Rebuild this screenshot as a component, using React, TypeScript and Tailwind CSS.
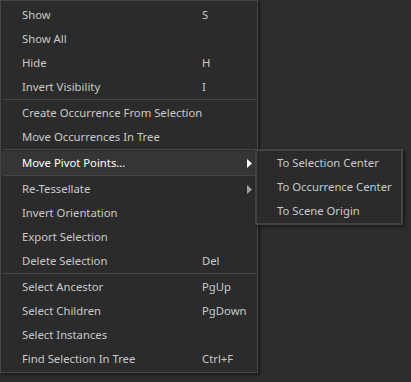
import React from "react";

type Item = { label: string; shortcut?: string; sub?: boolean; active?: boolean } | "sep";

const items: Item[] = [
  { label: "Show", shortcut: "S" },
  { label: "Show All" },
  { label: "Hide", shortcut: "H" },
  { label: "Invert Visibility", shortcut: "I" },
  "sep",
  { label: "Create Occurrence From Selection" },
  { label: "Move Occurrences In Tree" },
  "sep",
  { label: "Move Pivot Points...", sub: true, active: true },
  "sep",
  { label: "Re-Tessellate", sub: true },
  { label: "Invert Orientation" },
  { label: "Export Selection" },
  { label: "Delete Selection", shortcut: "Del" },
  "sep",
  { label: "Select Ancestor", shortcut: "PgUp" },
  { label: "Select Children", shortcut: "PgDown" },
  { label: "Select Instances" },
  { label: "Find Selection In Tree", shortcut: "Ctrl+F" },
];

function Arrow({ color }: { color: string }) {
  return (
    <svg width="5" height="9" viewBox="0 0 5 9" className="shrink-0">
      <path d="M0 0 L5 4.5 L0 9 Z" fill={color} />
    </svg>
  );
}

export default function App() {
  return (
    <div
      className="relative w-[411px] h-[382px] bg-[#2d2d2d] overflow-hidden"
      style={{ fontFamily: '"Segoe UI", "Noto Sans", sans-serif' }}
    >
      <div className="flex flex-col w-[258px] border border-[#464646] bg-[#2b2b2b] pt-[2px] pb-[1px] shadow-[2px_2px_3px_rgba(0,0,0,0.45)] text-[11.3px] leading-[16px]">
        {items.map((it, i) =>
          it === "sep" ? (
            <div key={i} className="h-[1px] bg-[#464646] ml-[2px] mb-[1px]" />
          ) : (
            <div
              key={i}
              className={`h-[24px] flex items-center pl-[21px] pr-[5px] ${
                it.active ? "bg-[#353535] text-white" : "text-[#c9c9c9]"
              }`}
            >
              <span className="w-[180px] shrink-0 whitespace-nowrap">{it.label}</span>
              <span className="flex-1 whitespace-nowrap">{it.shortcut ?? ""}</span>
              {it.sub && <Arrow color={it.active ? "#ffffff" : "#a0a0a0"} />}
            </div>
          )
        )}
      </div>
      <div className="absolute left-[255px] top-[149px] w-[148px] flex flex-col border-[2px] border-[#434343] bg-[#2b2b2b] shadow-[2px_2px_3px_rgba(0,0,0,0.45)] text-[11.3px] leading-[16px] text-[#c9c9c9]">
        {["To Selection Center", "To Occurrence Center", "To Scene Origin"].map((t) => (
          <div key={t} className="h-[24px] flex items-center pl-[20px] whitespace-nowrap">
            {t}
          </div>
        ))}
      </div>
    </div>
  );
}
